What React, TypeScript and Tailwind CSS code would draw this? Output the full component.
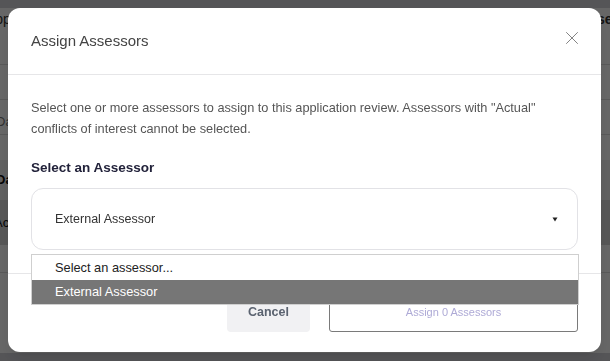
import { X } from "lucide-react";

const font = { fontFamily: '"Liberation Sans", Arial, sans-serif' };

function BackgroundPage() {
  return (
    <div className="h-[361px] w-[610px] overflow-hidden bg-white text-[13px] text-[#333]">
      <div className="h-[8px] bg-[#d4d4da]" />
      <div className="flex h-[57px] items-start justify-between border-b border-[#ddd] pt-[1px]">
        <span className="-ml-[14px] text-[14px]">Application</span>
        <span className="-mr-[40px] text-[14px] font-bold">Assessors</span>
      </div>
      <div className="h-[35px] border-b border-[#ddd]" />
      <div className="flex h-[35px] items-center border-b border-[#ddd] pt-[10px]">
        <span className="-ml-[4px] text-[#777]">Data</span>
      </div>
      <div className="h-[25px] bg-white" />
      <div className="flex h-[40px] items-center bg-[#f0f0f0]">
        <span className="-ml-[4px] font-bold text-[#111]">Data</span>
      </div>
      <div className="flex h-[45px] items-center bg-[#d8d8d8]">
        <span className="-ml-[6px] text-[#111]">Acu</span>
      </div>
      <div className="h-[28px] border-b border-[#ddd]" />
      <div className="h-[80px]" />
      <div className="h-[8px] bg-[#d4d4da]" />
    </div>
  );
}

export default function App() {
  return (
    <div className="relative h-[361px] w-[610px] overflow-hidden" style={font}>
      <BackgroundPage />
      <div className="fixed inset-0 bg-black/60">
        <div className="ml-[8px] mt-[8px] w-[593px] rounded-[12px] bg-white shadow-lg">
          <div className="flex h-[67px] items-center justify-between border-b border-[#e6e6e8] pl-[23px] pr-[18px]">
            <h2 className="text-[15px] text-[#444]">Assign Assessors</h2>
            <button className="-mt-[6px] flex h-[22px] w-[22px] items-center justify-center text-[#777]">
              <X size={22} strokeWidth={1} />
            </button>
          </div>

          <div className="px-[23px] pb-[23px] pt-[22px]">
            <p className="text-[12.75px] leading-[21px] text-[#555]">
              Select one or more assessors to assign to this application review. Assessors with "Actual"
              conflicts of interest cannot be selected.
            </p>
            <div className="mt-[19px] text-[13.5px] font-bold leading-[20px] text-[#22223a]">
              Select an Assessor
            </div>
            <div className="relative mt-[10px]">
              <div className="flex h-[62px] items-center justify-between rounded-[12px] border border-[#e2e2e6] pl-[23px] pr-[19px]">
                <span className="text-[12.5px] text-[#333]">External Assessor</span>
                <svg width="6" height="5" viewBox="0 0 6 5">
                  <path d="M0.5 0.5 L5.5 0.5 L3 4.5 Z" fill="#222" />
                </svg>
              </div>
              <div className="absolute left-0 top-[66px] z-10 w-[548px] border border-[#cfcfcf] bg-white text-[12.8px]">
                <div className="flex h-[24.5px] items-center pl-[23px] text-[#222]">Select an assessor...</div>
                <div className="flex h-[24.5px] items-center bg-[#767676] pl-[23px] text-white">External Assessor</div>
              </div>
            </div>
          </div>

          <div className="flex justify-end gap-[19px] border-t border-[#e6e6e8] px-[23px] pb-[20px] pt-[18px]">
            <button className="h-[40px] w-[83px] rounded-[4px] bg-[#f1f1f3] text-[12.5px] font-bold text-[#5b6370]">
              Cancel
            </button>
            <button className="h-[40px] w-[249px] rounded-[3px] border border-[#7a7a7a] bg-white text-[11px] text-[#aeaad6]">
              Assign 0 Assessors
            </button>
          </div>
        </div>
      </div>
    </div>
  );
}
